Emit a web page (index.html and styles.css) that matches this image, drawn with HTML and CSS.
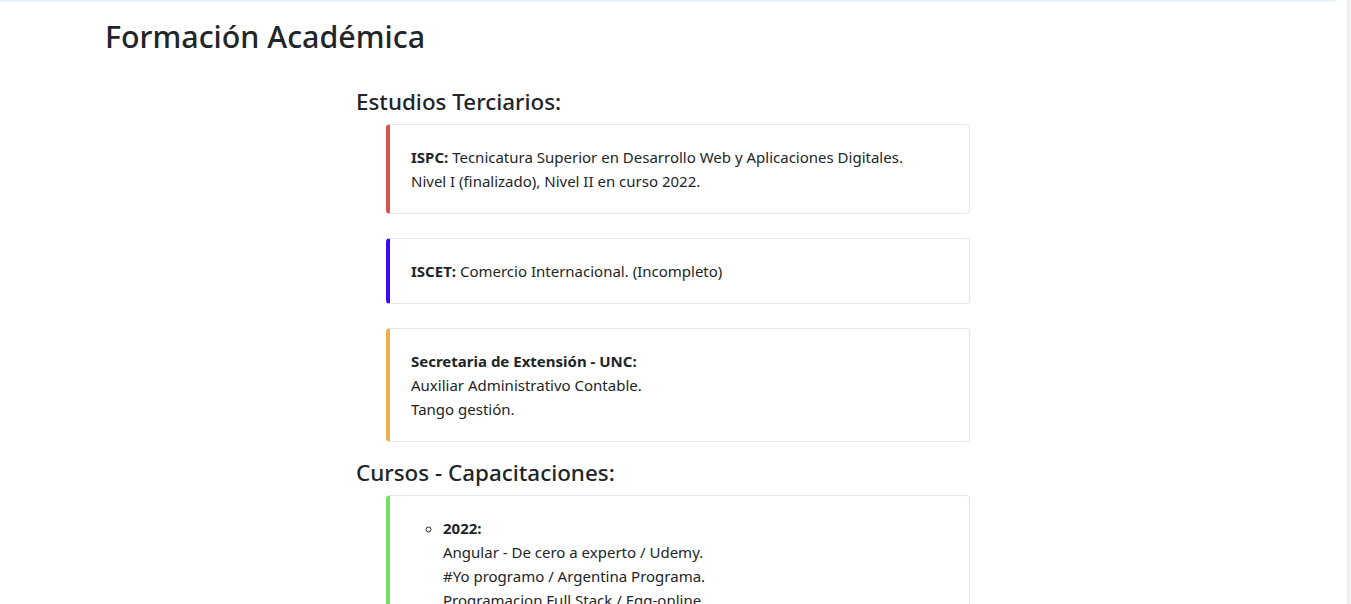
FILE: index.html
```html
<!DOCTYPE html>
<html lang="es">
<head>
<meta charset="utf-8">
<title>Formación Académica</title>
<link rel="stylesheet" href="styles.css">
</head>
<body>
<div class="viewport">
  <div class="page">
    <div class="topline"></div>
    <h2 class="title">Formación Académica</h2>
    <section class="studies">
      <h4 class="subtitle">Estudios Terciarios:</h4>
      <div class="card card-red">
        <p><strong>ISPC:</strong> Tecnicatura Superior en Desarrollo Web y Aplicaciones Digitales.<br>Nivel I (finalizado), Nivel II en curso 2022.</p>
      </div>
      <div class="card card-blue">
        <p><strong>ISCET:</strong> Comercio Internacional. (Incompleto)</p>
      </div>
      <div class="card card-orange last">
        <p><strong>Secretaria de Extensión - UNC:</strong><br>Auxiliar Administrativo Contable.<br>Tango gestión.</p>
      </div>
      <h4 class="subtitle">Cursos - Capacitaciones:</h4>
      <div class="card card-green">
        <ul class="courses">
          <li><strong>2022:</strong><br>Angular - De cero a experto / Udemy.<br>#Yo programo / Argentina Programa.<br>Programacion Full Stack / Egg-online.<br>Introducción a la programación / Udemy.</li>
        </ul>
      </div>
    </section>
  </div>
  <div class="gutter"></div>
</div>
</body>
</html>
```
FILE: styles.css
```css
html, body {
  margin: 0;
  padding: 0;
  background: #fff;
}
body {
  font-family: "Noto Sans", "Open Sans", sans-serif;
  font-size: 15px;
  line-height: 24px;
  color: #212529;
}
.viewport {
  display: flex;
  height: 604px;
  overflow: hidden;
}
.page {
  flex: 1;
}
.gutter {
  width: 3px;
  background: #f1f1f1;
  border-left: 1px solid #e9e9e9;
}
.topline {
  width: 1336px;
  height: 2px;
  background: #e4f6fb;
}
.title {
  font-size: 30.4px;
  font-weight: 500;
  line-height: 38px;
  margin: 16px 0 0 105px;
}
.studies {
  margin: 0 0 0 356px;
  padding-top: 31px;
}
.subtitle {
  font-size: 22.4px;
  font-weight: 500;
  line-height: 29px;
  margin: 0 0 8px 0;
}
.card {
  margin: 0 0 24px 30px;
  width: 584px;
  box-sizing: border-box;
  border: 1px solid #e6e6e6;
  border-left: 4px solid #ccc;
  border-radius: 4px;
  padding: 20px 20px 20px 21px;
}
.card.last {
  margin-bottom: 16px;
}
.card p {
  margin: 0;
}
.card-red { border-left-color: #d9534f; }
.card-blue { border-left-color: #3b0af0; }
.card-orange { border-left-color: #f0ad4e; }
.card-green { border-left-color: #77e062; }
.courses {
  margin: 0;
  padding-left: 32px;
  list-style: circle;
}
```
